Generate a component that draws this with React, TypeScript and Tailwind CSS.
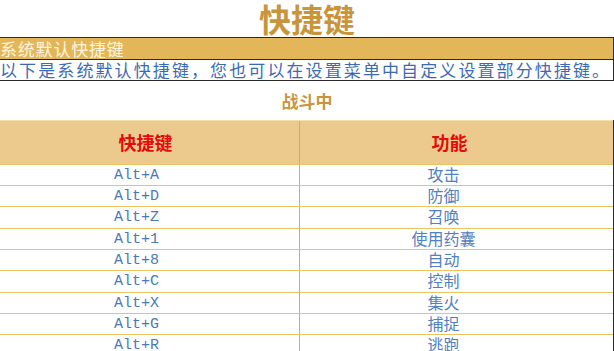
const rows = [
  ["Alt+A", "攻击"],
  ["Alt+D", "防御"],
  ["Alt+Z", "召唤"],
  ["Alt+1", "使用药囊"],
  ["Alt+8", "自动"],
  ["Alt+C", "控制"],
  ["Alt+X", "集火"],
  ["Alt+G", "捕捉"],
  ["Alt+R", "逃跑"],
];

const cjk = "font-['Microsoft_YaHei','Noto_Sans_CJK_SC',sans-serif]";

export default function App() {
  return (
    <div className={`w-[614px] h-[351px] overflow-hidden bg-white ${cjk}`}>
      {/* title */}
      <h1 className="h-[37px] text-center text-[32px] leading-[36px] font-bold text-[#c8953c]">
        快捷键
      </h1>

      {/* section header */}
      <div className="border-t border-b border-r border-[#2a2a2a]">
        <div className="h-[21px] bg-[#e3b65a] text-[17px] leading-[21px] tracking-[0.8px] text-[#fff6df] whitespace-nowrap">
          系统默认快捷键
        </div>
        <div className="h-[21px] border-t border-[#2a2a2a] text-[17px] leading-[20px] tracking-[2.1px] text-[#3c6bb4] whitespace-nowrap">
          以下是系统默认快捷键，您也可以在设置菜单中自定义设置部分快捷键。
        </div>
      </div>

      <div className="h-[39px] flex items-center justify-center text-[17px] font-bold text-[#c8953c]">
        战斗中
      </div>

      {/* table */}
      <div className="border-r border-[#2a2a2a]">
        <div className="flex h-[44px] bg-[#ecca8d] border-t border-[#f3dfae] text-[18px] font-bold text-[#e30b0b]">
          <div className="w-[300px] flex items-center justify-center pr-[8px] border-r border-[#d9ae52]">快捷键</div>
          <div className="flex-1 flex items-center justify-center pr-[14px]">功能</div>
        </div>
        {rows.map(([key, fn], i) => (
          <div
            key={key}
            className={`flex border-t border-[#e8c463] ${i % 3 === 2 ? "h-[22px]" : "h-[21px]"}`}
          >
            <div className="w-[300px] flex items-center justify-center pr-[26px] border-r border-[#d9ae52] font-['Liberation_Mono',monospace] text-[15px] leading-none text-[#4a79ba]">
              {key}
            </div>
            <div className="flex-1 flex items-center justify-center pr-[26px] pb-[3px] text-[16px] leading-none text-[#5280c0]">
              {fn}
            </div>
          </div>
        ))}
      </div>
    </div>
  );
}
